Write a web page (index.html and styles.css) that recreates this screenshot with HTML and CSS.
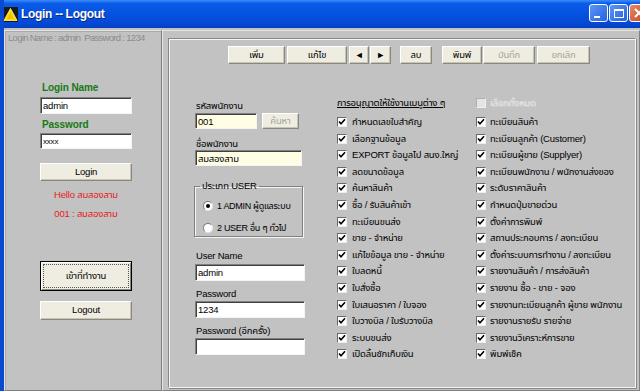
FILE: index.html
```html
<!DOCTYPE html>
<html lang="th">
<head>
    <meta charset="UTF-8">
    <meta name="viewport" content="width=device-width, initial-scale=1.0">
    <title>Login -- Logout</title>
    <link rel="stylesheet" href="styles.css">
</head>
<body>
    <div class="window">
        <!-- Title bar -->
        <div class="titlebar">
            <svg class="app-icon" width="15" height="15" viewBox="0 0 15 15">
                <rect x="0" y="0" width="15" height="15" fill="#1a1a1a"/>
                <polygon points="7.5,1.5 14,13.5 1,13.5" fill="#ffe000" stroke="#fff6a0" stroke-width="0.8"/>
                <polygon points="7.5,5 11,12 4,12" fill="#f0c000"/>
            </svg>
            <span class="title">Login -- Logout</span>
            <div class="controls">
                <span class="ctl min"><i></i></span>
                <span class="ctl max"><i></i></span>
                <span class="ctl close">
                    <svg width="12" height="12" viewBox="0 0 12 12"><path d="M2 2 L10 10 M10 2 L2 10" stroke="#fff" stroke-width="2"/></svg>
                </span>
            </div>
        </div>

        <div class="client">
            <!-- Left login panel -->
            <aside class="side">
                <p class="hint">Login Name : admin &nbsp;Password : 1234</p>
                <div class="login">
                    <div class="green lbl-name">Login Name</div>
                    <div class="field f-name">admin</div>
                    <div class="green lbl-pass">Password</div>
                    <div class="field f-pass">xxxx</div>
                    <div class="btn b-login">Login</div>
                    <div class="red r-hello">Hello สมสองสาม</div>
                    <div class="red r-id">001 : สมสองสาม</div>
                    <div class="btn b-enter"><span>เข้าที่ทำงาน</span></div>
                    <div class="btn b-logout">Logout</div>
                </div>
            </aside>

            <!-- Right user panel -->
            <main class="main">
                <div class="frame">
                    <div class="toolbar">
                        <div class="btn tb w-add">เพิ่ม</div>
                        <div class="btn tb w-edit">แก้ไข</div>
                        <div class="btn tb w-nav">&#9668;</div>
                        <div class="btn tb w-nav2">&#9658;</div>
                        <div class="btn tb w-del">ลบ</div>
                        <div class="btn tb w-print">พิมพ์</div>
                        <div class="btn tb w-save disabled">บันทึก</div>
                        <div class="btn tb w-cancel disabled">ยกเลิก</div>
                    </div>

                    <div class="content">
                        <div class="form">
                            <div class="lbl l-code">รหัสพนักงาน</div>
                            <div class="code-row">
                                <div class="field yellow f-code">001</div>
                                <div class="btn disabled b-find">ค้นหา</div>
                            </div>
                            <div class="lbl l-emp">ชื่อพนักงาน</div>
                            <div class="field yellow f-emp">สมสองสาม</div>

                            <fieldset class="group">
                                <legend>ประเภท USER</legend>
                                <div class="radio-row r1"><span class="radio on"></span>1 ADMIN ผู้ดูแลระบบ</div>
                                <div class="radio-row r2"><span class="radio"></span>2 USER อื่น ๆ ทั่วไป</div>
                            </fieldset>

                            <div class="lbl l-user">User Name</div>
                            <div class="field f-wide">admin</div>
                            <div class="lbl l-pw">Password</div>
                            <div class="field f-wide">1234</div>
                            <div class="lbl l-pw">Password (อีกครั้ง)</div>
                            <div class="field f-wide"></div>
                        </div>

                        <div class="perm col1">
                            <div class="perm-head"><u>การอนุญาตให้ใช้งานเมนูต่าง ๆ</u></div>
                            <ul class="checks" id="left-list"></ul>
                        </div>

                        <div class="perm col2">
                            <div class="perm-head all"><span class="box off"></span>เลือกทั้งหมด</div>
                            <ul class="checks" id="right-list"></ul>
                        </div>
                    </div>
                </div>
            </main>
        </div>
    </div>

    <script>
        // Menu permissions, all checked
        const leftItems = [
            'กำหนดเลขใบสำคัญ', 'เลือกฐานข้อมูล', 'EXPORT ข้อมูลไป สนง.ใหญ่', 'ลดขนาดข้อมูล',
            'ค้นหาสินค้า', 'ซื้อ / รับสินค้าเข้า', 'ทะเบียนขนส่ง', 'ขาย - จำหน่าย',
            'แก้ไขข้อมูล ขาย - จำหน่าย', 'ใบลดหนี้', 'ใบสั่งซื้อ', 'ใบเสนอราคา / ใบจอง',
            'ใบวางบิล / ใบรับวางบิล', 'ระบบขนส่ง', 'เปิดลิ้นชักเก็บเงิน'
        ];
        const rightItems = [
            'ทะเบียนสินค้า', 'ทะเบียนลูกค้า (Customer)', 'ทะเบียนผู้ขาย  (Supplyer)',
            'ทะเบียนพนักงาน / พนักงานส่งของ', 'ระดับราคาสินค้า', 'กำหนดปุ่มขายด่วน',
            'ตั้งค่าการพิมพ์', 'สถานประกอบการ / ลงทะเบียน', 'ตั้งค่าระบบการทำงาน / ลงทะเบียน',
            'รายงานสินค้า / การส่งสินค้า', 'รายงาน ซื้อ - ขาย - จอง',
            'รายงานทะเบียนลูกค้า ผู้ขาย พนักงาน', 'รายงานรายรับ รายจ่าย',
            'รายงานวิเคราะห์การขาย', 'พิมพ์เช็ค'
        ];

        const tick = '<svg width="8" height="8" viewBox="0 0 8 8"><path d="M1 3.5 L3 5.8 L7 1.2" fill="none" stroke="#000" stroke-width="1.6"/></svg>';

        function fillList(id, items) {
            const list = document.getElementById(id);
            items.forEach(text => {
                const li = document.createElement('li');
                li.innerHTML = `<span class="box">${tick}</span><span>${text}</span>`;
                list.appendChild(li);
            });
        }

        fillList('left-list', leftItems);
        fillList('right-list', rightItems);
    </script>
</body>
</html>
```

FILE: styles.css
```css
* {
    box-sizing: border-box;
}
body {
    margin: 0;
    font-family: "Liberation Sans", "Noto Sans Thai", Tahoma, sans-serif;
    font-size: 9.5px;
    letter-spacing: -0.2px;
    color: #000;
    background: #c2c2c2;
}
.window {
    width: 640px;
    height: 391px;
    overflow: hidden;
    background: #c2c2c2;
    border-left: 4px solid #0a4ad0;
}

/* Title bar */
.titlebar {
    height: 28px;
    margin-left: -4px;
    display: flex;
    align-items: center;
    padding-left: 3px;
    background: linear-gradient(#3c8ef8 0%, #0b5ce8 12%, #0652e0 50%, #0448d4 85%, #0340c0 100%);
}
.app-icon {
    flex: none;
}
.title {
    margin-left: 3px;
    color: #fff;
    font-family: "Liberation Sans", sans-serif;
    font-weight: bold;
    font-size: 12px;
    letter-spacing: -0.3px;
    text-shadow: 1px 1px 0 #0a2a80;
}
.controls {
    margin-left: auto;
    display: flex;
    gap: 1px;
    margin-right: -8px;
    align-self: flex-start;
    margin-top: 4px;
}
.ctl {
    width: 19px;
    height: 18px;
    border: 1px solid #fff;
    border-radius: 3px;
    background: linear-gradient(135deg, #5c95f8, #2663e0);
    position: relative;
    display: flex;
    align-items: center;
    justify-content: center;
}
.ctl.min i {
    width: 6px;
    height: 2px;
    background: #fff;
    margin-top: 8px;
    margin-right: 3px;
}
.ctl.max i {
    width: 10px;
    height: 9px;
    border: 1px solid #fff;
    border-top-width: 2px;
}
.ctl.close {
    background: linear-gradient(135deg, #e88a6a, #c8421c);
}

/* Client area */
.client {
    display: flex;
    height: 363px;
    padding-top: 2px;
}
.side {
    width: 158px;
    flex: none;
    border: 1px solid;
    border-color: #e4e4e4 #808080 #808080 #e4e4e4;
    box-shadow: inset 1px 1px 0 #a8a8a8;
}
.hint {
    margin: 1px 0 0 3px;
    line-height: 12px;
    color: #8c8c8c;
    font-size: 9.5px;
    letter-spacing: -0.7px;
    white-space: nowrap;
}
.login {
    padding-left: 35px;
    width: 127px;
    display: flex;
    flex-direction: column;
}
.green {
    color: #157a15;
    font-weight: bold;
    font-size: 10px;
    line-height: 12px;
    padding-left: 2px;
    letter-spacing: -0.1px;
}
.lbl-name {
    margin-top: 38px;
}
.lbl-pass {
    margin-top: 5px;
}
.field {
    background: #fff;
    height: 17px;
    line-height: 15px;
    padding-left: 2px;
    border: 1px solid;
    border-color: #808080 #f4f4f4 #f4f4f4 #808080;
    box-shadow: inset 1px 1px 0 #404040;
    white-space: nowrap;
    overflow: hidden;
}
.f-name {
    margin-top: 3px;
}
.f-pass {
    margin-top: 2px;
    height: 16px;
    font-size: 8px;
}
.btn {
    background: #efede2;
    border: 1px solid;
    border-color: #ffffff #8a887c #8a887c #ffffff;
    box-shadow: inset -1px -1px 0 #c8c5b4;
    text-align: center;
    height: 18px;
    line-height: 16px;
    white-space: nowrap;
}
.btn.disabled {
    color: #a6a498;
}
.b-login {
    margin-top: 14px;
}
.red {
    color: #e41c1c;
    text-align: center;
    line-height: 12px;
}
.r-hello {
    margin-top: 8px;
}
.r-id {
    margin-top: 7px;
}
.b-enter {
    margin-top: 41px;
    height: 30px;
    border: 1px solid #000;
    box-shadow: inset 1px 1px 0 #fff, inset -1px -1px 0 #8a887c;
    padding: 2px;
}
.b-enter span {
    display: block;
    height: 100%;
    line-height: 22px;
    border: 1px dotted #555;
}
.b-logout {
    margin-top: 10px;
    height: 19px;
}

/* Right panel */
.main {
    flex: 1;
    padding: 7px 3px 2px 5px;
    border: 1px solid;
    border-color: #e4e4e4 #808080 #808080 #e4e4e4;
}
.frame {
    height: 100%;
    border: 1px solid;
    border-color: #888 #f4f4f4 #f4f4f4 #888;
    box-shadow: inset 1px 1px 0 #f4f4f4, 1px 1px 0 #888;
    padding-top: 7px;
}
.toolbar {
    display: flex;
    margin-left: 59px;
}
.tb {
    height: 18px;
}
.w-add { width: 57px; }
.w-edit { width: 60px; margin-left: 2px; }
.w-nav { width: 20px; margin-left: 2px; font-size: 9px; }
.w-nav2 { width: 21px; margin-left: 1px; font-size: 9px; }
.w-del { width: 32px; margin-left: 9px; }
.w-print { width: 40px; margin-left: 10px; }
.w-save { width: 52px; margin-left: 1px; }
.w-cancel { width: 53px; margin-left: 2px; }

.content {
    display: flex;
    margin-top: 32px;
    padding-left: 26px;
}
.form {
    width: 110px;
    flex: none;
    display: flex;
    flex-direction: column;
}
.lbl {
    line-height: 12px;
    padding-left: 1px;
    white-space: nowrap;
}
.l-code {
    margin-top: 4px;
}
.code-row {
    display: flex;
    margin-top: 1px;
}
.yellow {
    background: #fffee4;
}
.f-code {
    width: 62px;
    height: 16px;
}
.b-find {
    width: 37px;
    height: 16px;
    line-height: 14px;
    margin-left: 5px;
}
.l-emp {
    margin-top: 9px;
}
.f-emp {
    width: 107px;
    height: 16px;
}
.group {
    margin: 15px 0 0 -1px;
    width: 109px;
    height: 56px;
    padding: 0 0 0 8px;
    border: 1px solid #808080;
    box-shadow: 1px 1px 0 #f4f4f4, inset 1px 1px 0 #f4f4f4;
}
.group legend {
    padding: 0 2px;
    margin-left: -3px;
    line-height: 10px;
}
.radio-row {
    display: flex;
    align-items: center;
    height: 22px;
    white-space: nowrap;
    font-size: 9px;
    letter-spacing: -0.3px;
}
.r1 {
    margin-top: 4px;
}
.radio {
    width: 10px;
    height: 10px;
    border-radius: 50%;
    background: #fff;
    border: 1px solid;
    border-color: #7a7a7a #e8e8e8 #e8e8e8 #7a7a7a;
    margin-right: 4px;
    display: flex;
    align-items: center;
    justify-content: center;
}
.radio.on::after {
    content: "";
    width: 4px;
    height: 4px;
    border-radius: 50%;
    background: #000;
}
.l-user {
    margin-top: 13px;
}
.l-pw {
    margin-top: 7px;
}
.f-wide {
    width: 110px;
    margin-top: 1px;
}
.l-user + .f-wide {
    margin-top: 2px;
}

/* Permissions */
.perm {
    margin-left: 32px;
}
.col1 {
    width: 107px;
    flex: none;
}
.col2 {
    margin-left: 32px;
}
.perm-head {
    height: 14px;
    line-height: 14px;
    white-space: nowrap;
}
.perm-head.all {
    display: flex;
    align-items: center;
    color: #e8e8e8;
    text-shadow: 1px 1px 0 #d0d0d0;
}
.checks {
    list-style: none;
    margin: 3.7px 0 0;
    padding: 0;
}
.checks li {
    height: 16.6px;
    display: flex;
    align-items: center;
    white-space: nowrap;
}
.box {
    flex: none;
    width: 10px;
    height: 10px;
    background: #fff;
    border: 1px solid;
    border-color: #6a6a6a #eeeeee #eeeeee #6a6a6a;
    margin-right: 5px;
    display: flex;
    align-items: center;
    justify-content: center;
}
.col2 .box {
    margin-right: 4px;
}
.box.off {
    background: #e4e4e4;
    border-color: #b0b0b0 #f0f0f0 #f0f0f0 #b0b0b0;
}
```
